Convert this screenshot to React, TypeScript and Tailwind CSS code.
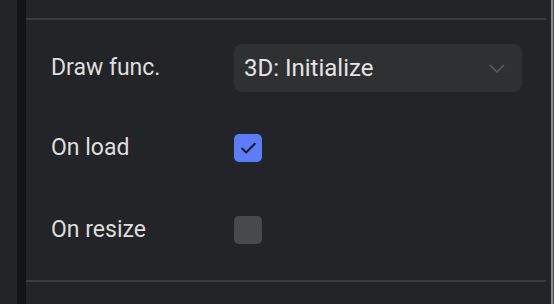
import { Check } from "lucide-react";

const Row = ({
  label,
  children,
  className,
}: {
  label: string;
  children: React.ReactNode;
  className?: string;
}) => (
  <div className={`flex h-12 items-center ${className ?? ""}`}>
    <span className="w-[183px] text-[23px] text-[#dedede]">{label}</span>
    {children}
  </div>
);

export default function App() {
  return (
    <div
      className="flex h-[304px] w-[554px] overflow-hidden bg-[#232427]"
      style={{ fontFamily: "Roboto, 'Noto Sans', sans-serif" }}
    >
      <div className="w-[17px] shrink-0" />
      <div className="w-[9px] shrink-0 bg-[#131416]" />
      <div className="flex flex-1 flex-col pt-[18px]">
        <div className="h-[2px] bg-[#3a3b3e]" />
        <div className="flex flex-col pl-[25px] pt-[24px]">
          <Row label="Draw func.">
            <div className="flex h-12 w-[288px] items-center justify-between rounded-lg bg-[#2e3032] pl-[10px] pr-[17px]">
              <span className="text-[24px] text-[#e4e4e4]">3D: Initialize</span>
              <svg width="16" height="9" viewBox="0 0 16 9" fill="none">
                <path d="M1 1l7 7 7-7" stroke="#5b5e61" strokeWidth="1.5" />
              </svg>
            </div>
          </Row>
          <Row label="On load" className="mt-[32px]">
            <div className="flex h-7 w-7 items-center justify-center rounded-[5px] bg-[#5d7cf9]">
              <Check size={19} strokeWidth={2.5} className="text-[#1c1d21]" />
            </div>
          </Row>
          <Row label="On resize" className="mt-[34px]">
            <div className="h-7 w-7 rounded-[5px] bg-[#48494c]" />
          </Row>
        </div>
        <div className="mt-[26px] h-[2px] bg-[#3a3b3e]" />
      </div>
      <div className="w-[5px] shrink-0" />
      <div className="w-[2px] shrink-0 bg-[#8a8b8d]" />
      <div className="w-[1px] shrink-0 bg-[#4a4b4e]" />
    </div>
  );
}
